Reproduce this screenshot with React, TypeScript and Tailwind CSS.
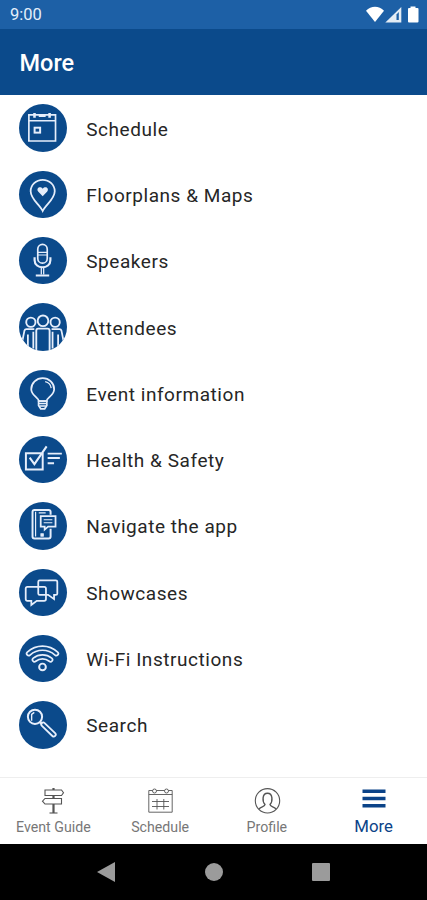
import type { ReactNode } from "react";

const menuItems: { label: string; icon: ReactNode }[] = [
  {
    label: "Schedule",
    icon: (
      <>
        <path d="M10 11H37V37.5H10Z" />
        <path d="M10 17H37" />
        <path d="M20 12.2H27" strokeWidth="2" />
        <path d="M15.7 9V14M31 9V14" strokeWidth="2.6" />
        <rect x="15.8" y="24" width="5.6" height="5" strokeWidth="2" />
      </>
    ),
  },
  {
    label: "Floorplans & Maps",
    icon: (
      <>
        <path
          d="M24 40.5C21 34 11.8 28.5 11.8 20.5A12.2 11.6 0 0 1 36.2 20.5C36.2 28.5 27 34 24 40.5Z"
          strokeWidth="1.8"
        />
        <path
          d="M24 25.6L19.4 20.7C17 17.5 21.4 14.4 24 18C26.6 14.4 31 17.5 28.6 20.7Z"
          fill="currentColor"
          stroke="none"
        />
      </>
    ),
  },
  {
    label: "Speakers",
    icon: (
      <>
        <rect x="19" y="7.5" width="9.6" height="19" rx="4.8" />
        <path d="M19 15.6H28.6M19 18.2H28.6" strokeWidth="1.1" />
        <path d="M15.8 20.5V23.5C15.8 33 31.8 33 31.8 23.5V20.5" strokeWidth="2.2" />
        <path d="M22.6 31V38M25 31V38" strokeWidth="1.3" />
        <path d="M17 39H30.6" strokeWidth="2.2" />
      </>
    ),
  },
  {
    label: "Attendees",
    icon: (
      <>
        <circle cx="12" cy="19.5" r="4.7" strokeWidth="1.9" />
        <circle cx="36.6" cy="19.5" r="4.7" strokeWidth="1.9" />
        <circle cx="24.3" cy="18" r="5.4" strokeWidth="1.9" />
        <path d="M3.5 38L5.5 28Q6 26.5 7.5 26.5H15.5" strokeWidth="1.8" />
        <path d="M45 38L43 28Q42.5 26.5 41 26.5H33" strokeWidth="1.8" />
        <path d="M17.5 48V28Q17.5 26 19.5 26H29Q31 26 31 28V48" strokeWidth="1.9" />
        <path d="M14.5 46V29M34 46V29M9 44V32M39.6 44V32" strokeWidth="1.8" />
      </>
    ),
  },
  {
    label: "Event information",
    icon: (
      <>
        <path
          d="M20 31.5C20 27.8 12.4 26 12.4 19.5A11.6 11.2 0 0 1 35.6 19.5C35.6 26 28 27.8 28 31.5Z"
          strokeWidth="1.8"
        />
        <path d="M26.5 11.8C30 12.6 32.2 15 32.6 18.4" strokeWidth="1.3" />
        <path d="M19.8 31.5V36L22 39.3H26L28.2 36V31.5Z" />
        <path d="M20 34H28M20.7 36.5H27.3" strokeWidth="1.5" />
      </>
    ),
  },
  {
    label: "Health & Safety",
    icon: (
      <>
        <path d="M24 25V34H7V17.4H22.5M24 17V26" strokeWidth="2" />
        <path d="M10.8 22L15.6 28.5L28 10.5" strokeWidth="2.1" />
        <path d="M29 17.8H43.4M29 22.3H41.4M29 27.6H35.5" strokeWidth="1.9" />
      </>
    ),
  },
  {
    label: "Navigate the app",
    icon: (
      <>
        <path
          d="M32 13V10Q32 8 30 8H15.7Q13.7 8 13.7 10V35Q13.7 37 15.7 37H30Q32 37 32 35V27"
          strokeWidth="2"
        />
        <path d="M16.8 10V35M20 11H27" strokeWidth="1.2" />
        <path d="M22 14.3H37V25H29.5L26 28V25H22Z" strokeWidth="1.8" />
        <path d="M25 18H33.8M25 21H33.8" strokeWidth="1.1" />
        <rect x="22.2" y="32.2" width="2.4" height="2.4" fill="currentColor" strokeWidth="1" />
      </>
    ),
  },
  {
    label: "Showcases",
    icon: (
      <>
        <path
          d="M21 11.5H37.3Q38.8 11.5 38.8 13V24.7Q38.8 26.2 37.3 26.2H35.5V30.5L29.5 26.2H21Q19.5 26.2 19.5 24.7V13Q19.5 11.5 21 11.5Z"
          strokeWidth="1.8"
        />
        <path
          d="M8.5 18H25.5Q27.3 18 27.3 19.8V30.5Q27.3 32.3 25.5 32.3H18L12.5 36.5V32.3H8.5Q6.8 32.3 6.8 30.5V19.8Q6.8 18 8.5 18Z"
          strokeWidth="1.8"
        />
      </>
    ),
  },
  {
    label: "Wi-Fi Instructions",
    icon: (
      <>
        <g strokeLinecap="round" strokeWidth="5.8">
          <path d="M9.8 18.8C17.8 11.6 29.8 11.6 37.8 18.8" />
          <path d="M15.7 25C20.5 21.2 27.1 21.2 31.9 25" />
        </g>
        <g strokeLinecap="round" strokeWidth="2.4" stroke="#0b4a8b">
          <path d="M9.8 18.8C17.8 11.6 29.8 11.6 37.8 18.8" />
          <path d="M15.7 25C20.5 21.2 27.1 21.2 31.9 25" />
        </g>
        <circle cx="23.8" cy="32.4" r="3.4" fill="#0b4a8b" strokeWidth="2" />
      </>
    ),
  },
  {
    label: "Search",
    icon: (
      <>
        <circle cx="16.2" cy="16" r="7.2" strokeWidth="2" />
        <path d="M12.8 20V13.5L15.5 11.5" strokeWidth="1.4" />
        <path d="M21 21L24 24" strokeWidth="2.6" />
        <path d="M24.6 23.8L35.2 34" strokeWidth="5.8" strokeLinecap="round" />
        <path d="M24.6 23.8L35.2 34" strokeWidth="2.2" strokeLinecap="round" stroke="#0b4a8b" />
      </>
    ),
  },
];

const tabs: { label: string; icon: ReactNode }[] = [
  {
    label: "Event Guide",
    icon: (
      <>
        <path d="M14.5 1V3M14.5 8.5V11.5M14.5 17V26" strokeWidth="2.2" />
        <path d="M6 3H22.5L24.5 5.7L22.5 8.5H6Z" />
        <path d="M6 11.5H22.5V17H6L3.5 14.2Z" />
        <path d="M10.5 26H18.5" />
      </>
    ),
  },
  {
    label: "Schedule",
    icon: (
      <g strokeWidth="0.9">
        <path d="M6.5 3.5H2.8V25.2H26.2V3.5H22.5M10.5 3.5H18.5M2.8 7.5H26.2" />
        <circle cx="8.5" cy="4" r="2" />
        <circle cx="20.5" cy="4" r="2" />
        <path d="M6 14.5H23M6 19.5H23M11 12V22.5M17.8 12V22.5" />
      </g>
    ),
  },
  {
    label: "Profile",
    icon: (
      <>
        <circle cx="14.5" cy="13.8" r="12.2" />
        <path
          d="M6 22.3C7 19.8 12 19.8 12 17.6C9.3 14.8 8.8 6.3 14.5 6.3C20.2 6.3 19.7 14.8 17 17.6C17 19.8 22 19.8 23 22.3"
          strokeWidth="1.4"
        />
      </>
    ),
  },
];

export default function App() {
  return (
    <div className="flex h-[900px] w-[427px] flex-col overflow-hidden bg-white font-['Roboto',sans-serif]">
      {/* Status bar */}
      <div className="flex h-[29px] shrink-0 items-center justify-between bg-[#1d60a6] pl-[10px] pr-[6px] text-white">
        <span className="pt-[2px] text-[16.5px] leading-none text-[#e4effa]">9:00</span>
        <svg width="55" height="20" viewBox="0 0 55 20" fill="currentColor">
          <path d="M0 5.7C5 0.5 13 0.5 18 5.7L9 17Z" />
          <path d="M35.3 2V17.5H19.3Z" opacity="0.88" />
          <path d="M30.5 9.5L32.8 7V15H30.5Z" fill="#1d60a6" />
          <path d="M44.5 1.5H49.5V3H51.5Q52.5 3 52.5 4V16.5Q52.5 17.5 51.5 17.5H43Q42 17.5 42 16.5V4Q42 3 43 3H44.5Z" />
        </svg>
      </div>

      {/* Header */}
      <div className="flex h-[66px] shrink-0 items-center bg-[#0b4a8b] pl-[19.5px]">
        <h1 className="pt-[4px] text-[23.5px] font-medium leading-none text-white">More</h1>
      </div>

      {/* Menu list */}
      <ul className="flex-1">
        {menuItems.map((item) => (
          <li key={item.label} className="flex h-[66.3px] items-center pl-[19.4px]">
            <div className="h-[47.4px] w-[47.4px] shrink-0 overflow-hidden rounded-full bg-[#0b4a8b] text-[#e6eefb]">
              <svg
                className="h-full w-full"
                viewBox="0 0 48 48"
                fill="none"
                stroke="currentColor"
                strokeWidth="1.7"
              >
                {item.icon}
              </svg>
            </div>
            <span className="ml-[19.5px] pt-[2px] text-[19px] leading-none tracking-[0.55px] text-[#262626]">
              {item.label}
            </span>
          </li>
        ))}
      </ul>

      {/* Tab bar */}
      <div className="grid h-[67px] shrink-0 grid-cols-4 border-t border-[#eeeeee] bg-white">
        {tabs.map((tab) => (
          <div key={tab.label} className="flex flex-col items-center pt-[9px] text-[#777777]">
            <svg width="28" height="28" viewBox="0 0 28 28" fill="none" stroke="#555555" strokeWidth="1.1">
              {tab.icon}
            </svg>
            <span className="mt-[5px] whitespace-nowrap text-[14.2px] leading-none">{tab.label}</span>
          </div>
        ))}
        <div className="flex flex-col items-center pt-[11px] text-[#0b4388]">
          <svg width="24" height="20" viewBox="0 0 24 20" fill="currentColor">
            <path d="M0.5 0.5H23.5V4H0.5ZM0.5 7.7H23.5V11.2H0.5ZM0.5 15H23.5V18.5H0.5Z" />
          </svg>
          <span className="mt-[9px] text-[16.8px] leading-none">More</span>
        </div>
      </div>

      {/* Android navigation */}
      <div className="flex h-[56px] shrink-0 items-center justify-center bg-black">
        <svg width="234" height="20" viewBox="0 0 234 20" fill="#9b9b9b">
          <path d="M18 0V20L0 10Z" />
          <circle cx="117" cy="10" r="9" />
          <rect x="215" y="1" width="18" height="18" rx="1" />
        </svg>
      </div>
    </div>
  );
}
